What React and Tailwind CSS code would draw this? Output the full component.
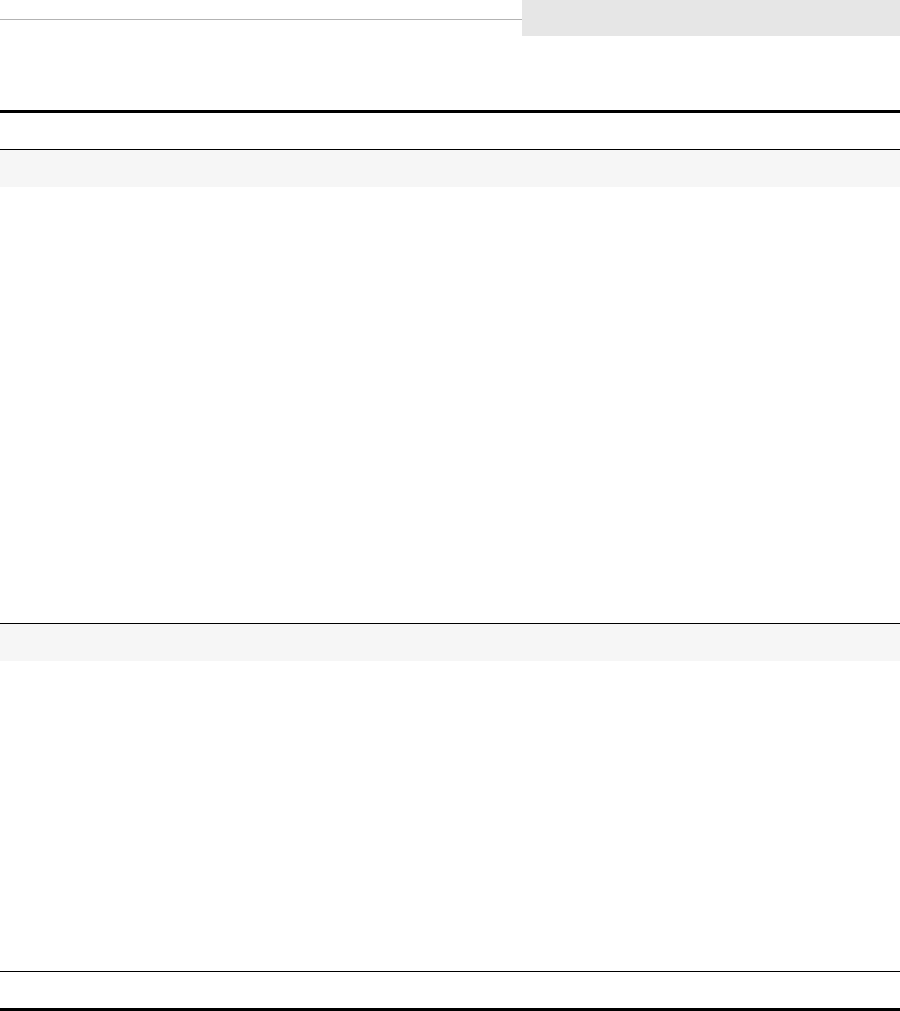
import React from "react";

const App = () => {
  return (
    <div className="min-h-screen bg-white font-['Liberation_Sans',sans-serif]">
      {/* top bar: search rule + box */}
      <div className="flex h-9">
        <div className="flex-1 h-5 border-b border-[#b3b3b3]" />
        <div className="w-[378px] h-9 bg-[#e6e6e6]" />
      </div>

      <div className="mt-[74px] border-t-[3px] border-black" />

      <div className="h-9" />

      <section className="border-t border-black">
        <div className="h-[37px] bg-[#f6f6f6]" />
        <div className="h-[436px]" />
      </section>

      <section className="border-t border-black">
        <div className="h-[37px] bg-[#f6f6f6]" />
        <div className="h-[310px]" />
      </section>

      <div className="border-t border-black h-[37px]" />
      <div className="border-t-[3px] border-black" />
    </div>
  );
};

export default App;
